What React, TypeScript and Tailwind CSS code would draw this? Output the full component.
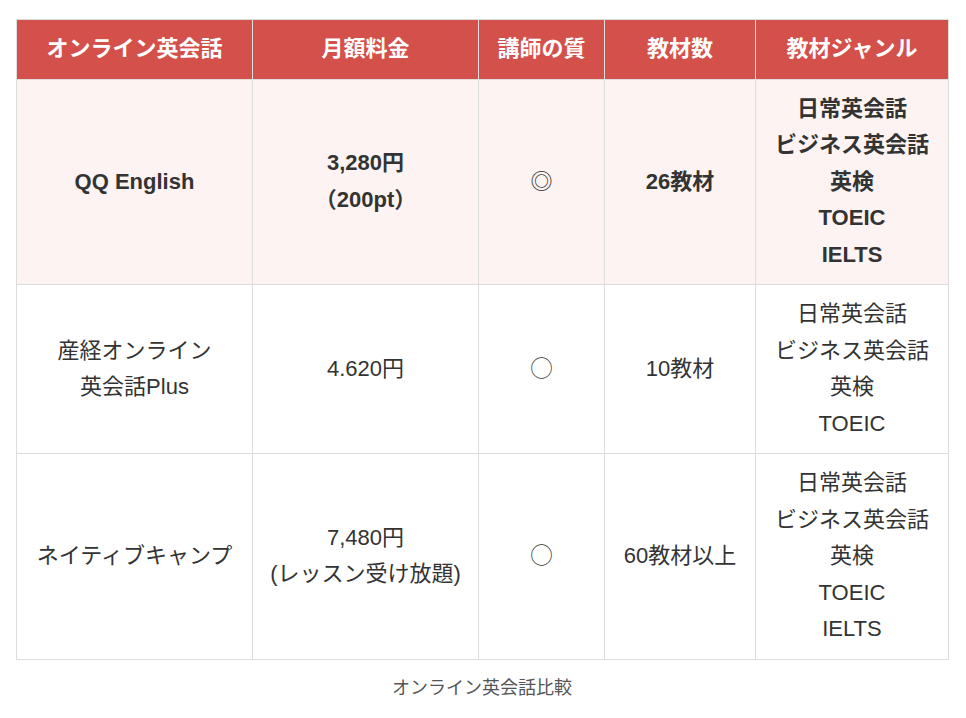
const header = ['オンライン英会話', '月額料金', '講師の質', '教材数', '教材ジャンル']

interface Row {
  name: string[]
  price: string[]
  quality: string
  count: string
  genres: string[]
  highlight?: boolean
}

const rows: Row[] = [
  {
    name: ['QQ English'],
    price: ['3,280円', '（200pt）'],
    quality: '◎',
    count: '26教材',
    genres: ['日常英会話', 'ビジネス英会話', '英検', 'TOEIC', 'IELTS'],
    highlight: true,
  },
  {
    name: ['産経オンライン', '英会話Plus'],
    price: ['4.620円'],
    quality: '◯',
    count: '10教材',
    genres: ['日常英会話', 'ビジネス英会話', '英検', 'TOEIC'],
  },
  {
    name: ['ネイティブキャンプ'],
    price: ['7,480円', '(レッスン受け放題)'],
    quality: '◯',
    count: '60教材以上',
    genres: ['日常英会話', 'ビジネス英会話', '英検', 'TOEIC', 'IELTS'],
  },
]

function Lines({ items }: { items: string[] }) {
  return (
    <>
      {items.map((t, i) => (
        <div key={i}>{t}</div>
      ))}
    </>
  )
}

export default function App() {
  return (
    <div
      className="bg-white w-[966px] h-[718px] pt-[19px] px-[16px] text-[#333]"
      style={{ fontFamily: '"Liberation Sans", "Noto Sans CJK JP", sans-serif' }}
    >
      <table className="w-[932px] table-fixed border-collapse text-[22px] leading-[36.5px] text-center">
        <colgroup>
          <col className="w-[236px]" />
          <col className="w-[226px]" />
          <col className="w-[126px]" />
          <col className="w-[151px]" />
          <col className="w-[193px]" />
        </colgroup>
        <thead>
          <tr className="bg-[#d4504a] text-white">
            {header.map((h) => (
              <th key={h} className="border border-[#dddddd] py-[11px] px-1 font-bold whitespace-nowrap">
                {h}
              </th>
            ))}
          </tr>
        </thead>
        <tbody>
          {rows.map((r, i) => (
            <tr key={i} className={r.highlight ? 'bg-[#fcf3f2] font-bold' : 'bg-white'}>
              <td className="border border-[#dddddd] py-[11px] px-1 align-middle">
                <Lines items={r.name} />
              </td>
              <td className="border border-[#dddddd] py-[11px] px-1 align-middle">
                <Lines items={r.price} />
              </td>
              <td className="border border-[#dddddd] py-[11px] px-1 align-middle font-normal">
                {r.quality}
              </td>
              <td className="border border-[#dddddd] py-[11px] px-1 align-middle whitespace-nowrap">
                {r.count}
              </td>
              <td className="border border-[#dddddd] py-[11px] px-0 align-middle whitespace-nowrap">
                <Lines items={r.genres} />
              </td>
            </tr>
          ))}
        </tbody>
      </table>
      <div className="text-center text-[18px] text-[#555] mt-[15px] w-[932px]">オンライン英会話比較</div>
    </div>
  )
}
